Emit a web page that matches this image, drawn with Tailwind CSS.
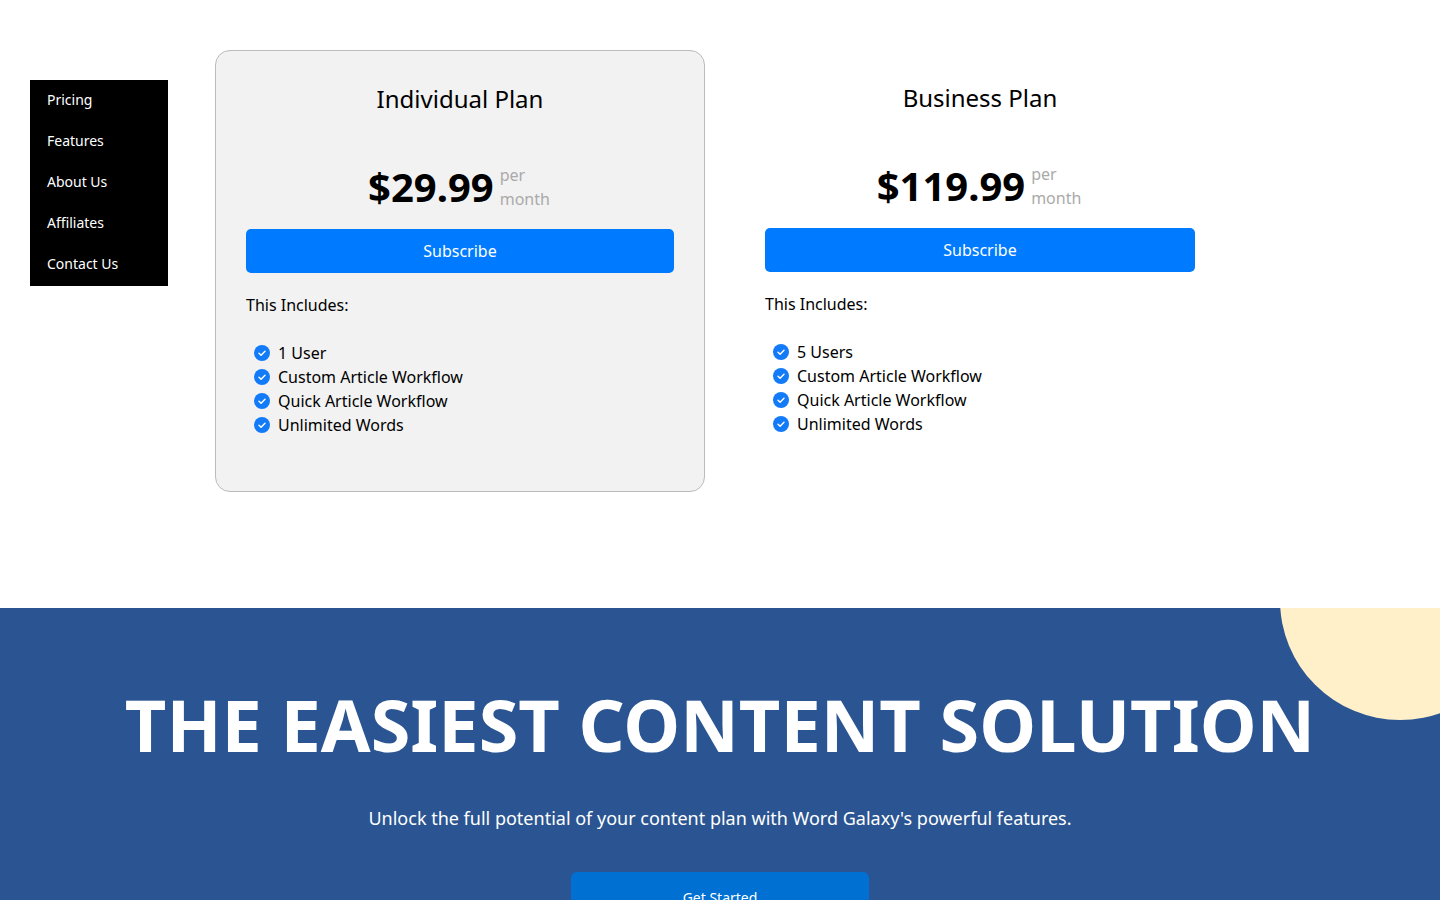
<!DOCTYPE html>
<html lang="en">
<head>
  <meta charset="UTF-8" />
  <meta name="viewport" content="width=device-width, initial-scale=1.0" />
  <title>Word Galaxy - Pricing</title>
  <script src="https://cdn.jsdelivr.net/npm/@tailwindcss/browser@4"></script>
</head>
<body class="bg-white text-black font-['Noto_Sans',sans-serif] overflow-x-hidden">

  <!-- Check icon, used by the plan lists -->
  <svg class="hidden" aria-hidden="true">
    <symbol id="check" viewBox="0 0 16 16">
      <circle cx="8" cy="8" r="8" fill="#147bf8" />
      <path d="M5 8.2 7.1 10.2 11 6.2" fill="none" stroke="#fff" stroke-width="1.4" stroke-linecap="round" stroke-linejoin="round" />
    </symbol>
  </svg>

  <div class="grid grid-cols-[1fr_minmax(0,1010px)_1fr] pt-[50px] pb-[116px]">

    <!-- Side menu -->
    <nav class="ml-[30px] mt-[30px] flex w-[138px] flex-col gap-px self-start bg-black pb-0.5 text-sm/5 text-white">
      <a href="#pricing" class="px-[17px] py-2.5">Pricing</a>
      <a href="#features" class="px-[17px] py-2.5">Features</a>
      <a href="#about" class="px-[17px] py-2.5">About Us</a>
      <a href="#affiliates" class="px-[17px] py-2.5">Affiliates</a>
      <a href="#contact" class="px-[17px] py-2.5">Contact Us</a>
    </nav>

    <!-- Plans -->
    <main id="pricing" class="grid grid-cols-2 gap-[30px]">

      <section class="rounded-[15px] border border-[#bbb] bg-[#f2f2f2] p-[30px]">
        <h2 class="text-center text-2xl/9">Individual Plan</h2>
        <div class="mt-[46px] flex items-center justify-center gap-1.5 pr-0.5">
          <span class="text-[40px]/12 font-bold">$29.99</span>
          <span class="text-base/6 text-[#aaa]">per<br />month</span>
        </div>
        <button type="button" class="mt-[18px] h-11 w-full rounded-[5px] bg-[#007bff] text-white">Subscribe</button>
        <p class="mt-5">This Includes:</p>
        <ul class="my-6 pl-2">
          <li class="flex items-center gap-2"><svg class="size-4"><use href="#check" /></svg>1 User</li>
          <li class="flex items-center gap-2"><svg class="size-4"><use href="#check" /></svg>Custom Article Workflow</li>
          <li class="flex items-center gap-2"><svg class="size-4"><use href="#check" /></svg>Quick Article Workflow</li>
          <li class="flex items-center gap-2"><svg class="size-4"><use href="#check" /></svg>Unlimited Words</li>
        </ul>
      </section>

      <section class="p-[30px]">
        <h2 class="text-center text-2xl/9">Business Plan</h2>
        <div class="mt-[46px] flex items-center justify-center gap-1.5 pr-0.5">
          <span class="text-[40px]/12 font-bold">$119.99</span>
          <span class="text-base/6 text-[#aaa]">per<br />month</span>
        </div>
        <button type="button" class="mt-[18px] h-11 w-full rounded-[5px] bg-[#007bff] text-white">Subscribe</button>
        <p class="mt-5">This Includes:</p>
        <ul class="my-6 pl-2">
          <li class="flex items-center gap-2"><svg class="size-4"><use href="#check" /></svg>5 Users</li>
          <li class="flex items-center gap-2"><svg class="size-4"><use href="#check" /></svg>Custom Article Workflow</li>
          <li class="flex items-center gap-2"><svg class="size-4"><use href="#check" /></svg>Quick Article Workflow</li>
          <li class="flex items-center gap-2"><svg class="size-4"><use href="#check" /></svg>Unlimited Words</li>
        </ul>
      </section>

    </main>
  </div>

  <!-- Call to action -->
  <section class="relative overflow-hidden bg-[#2a5592] px-5 pt-16 pb-20 text-center text-white">
    <div class="absolute -top-32 -right-20 size-60 rounded-full bg-[#fff0c9]"></div>
    <h1 class="relative text-7xl/[104px] font-bold">THE EASIEST CONTENT SOLUTION</h1>
    <p class="relative mt-7 text-lg/7">Unlock the full potential of your content plan with Word Galaxy's powerful features.</p>
    <a href="#pricing" class="mx-auto mt-10 block w-[298px] rounded-md bg-[#0070d2] py-4 text-sm/5">Get Started</a>
  </section>

</body>
</html>
